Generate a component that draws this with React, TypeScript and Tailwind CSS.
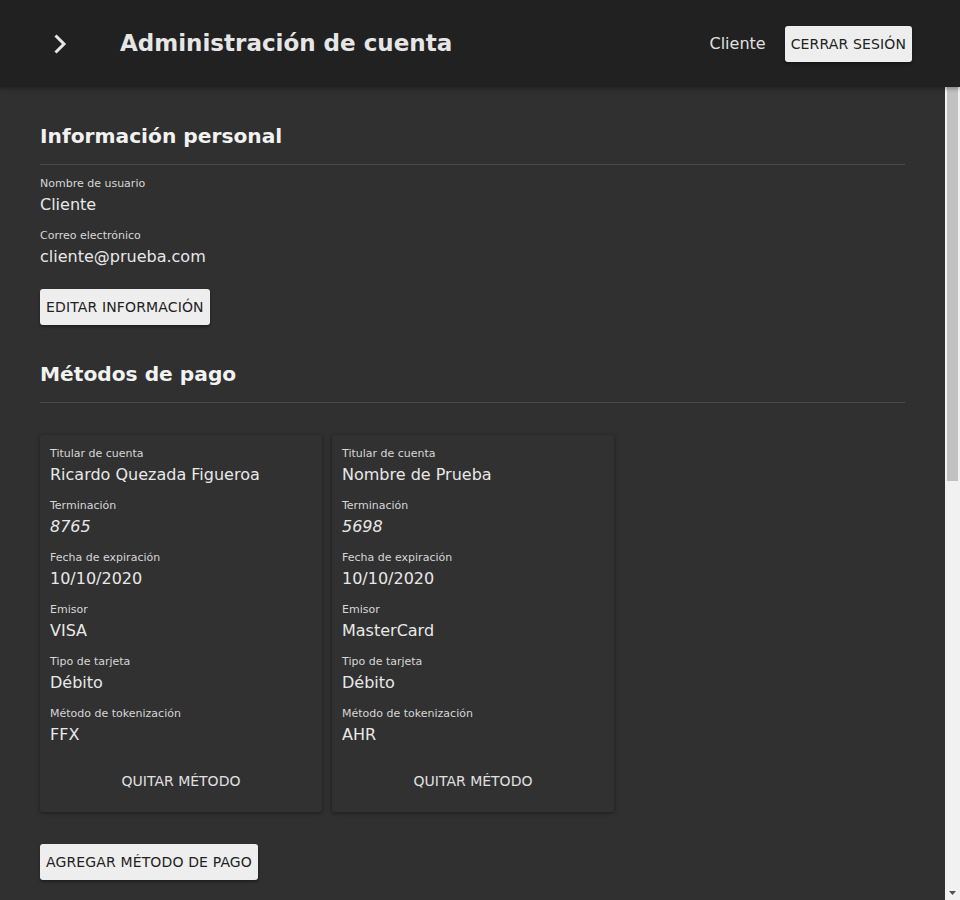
import { ReactNode } from 'react'

const cards = [
  {
    holder: 'Ricardo Quezada Figueroa',
    last4: '8765',
    expires: '10/10/2020',
    issuer: 'VISA',
    type: 'Débito',
    token: 'FFX',
  },
  {
    holder: 'Nombre de Prueba',
    last4: '5698',
    expires: '10/10/2020',
    issuer: 'MasterCard',
    type: 'Débito',
    token: 'AHR',
  },
]

function Field({ label, children, italic }: { label: string; children: ReactNode; italic?: boolean }) {
  return (
    <div className="mb-[10px]">
      <div className="text-[11px] leading-[18px] text-[#d6d6d6]">{label}</div>
      <div className={`text-base leading-6 text-[#e8e8e8] ${italic ? 'italic' : ''}`}>{children}</div>
    </div>
  )
}

function SectionTitle({ children }: { children: ReactNode }) {
  return (
    <div>
      <h2 className="text-[20.2px] leading-8 font-bold text-[#f2f2f2]">{children}</h2>
      <div className="mt-3 h-px bg-[#4a4a4a]" />
    </div>
  )
}

function LightButton({ children }: { children: ReactNode }) {
  return (
    <button className="h-9 px-1.5 rounded-[3px] bg-[#eeeeee] text-[#222] text-sm uppercase tracking-[0.01em] shadow-[0_2px_3px_rgba(0,0,0,0.35)]">
      {children}
    </button>
  )
}

export default function App() {
  return (
    <div className="h-[900px] w-[960px] overflow-hidden flex flex-col bg-[#303030] font-['DejaVu_Sans',sans-serif]">
      <header className="relative z-10 h-[87px] shrink-0 bg-[#212121] shadow-[0_2px_4px_rgba(0,0,0,0.3)] flex items-center pl-12 pr-12">
        <svg width="24" height="24" viewBox="0 0 24 24" fill="none" className="stroke-[#e6e6e6]">
          <path d="M7.5 3.5L16 12l-8.5 8.5" strokeWidth="3" strokeLinejoin="miter" />
        </svg>
        <h1 className="ml-12 text-[23px] font-bold text-[#e6e6e6]">Administración de cuenta</h1>
        <div className="ml-auto flex items-center gap-[19px]">
          <span className="text-base text-[#e0e0e0]">Cliente</span>
          <LightButton>Cerrar sesión</LightButton>
        </div>
      </header>

      <div className="flex flex-1 min-h-0">
        <main className="flex-1 min-w-0 flex flex-col pt-[33px] px-10">
          <SectionTitle>Información personal</SectionTitle>
          <div className="mt-[10px]">
            <Field label="Nombre de usuario">Cliente</Field>
            <Field label="Correo electrónico">cliente@prueba.com</Field>
          </div>
          <div className="mt-[10px]">
            <LightButton>Editar información</LightButton>
          </div>

          <div className="mt-[33px]">
            <SectionTitle>Métodos de pago</SectionTitle>
          </div>

          <div className="mt-[32px] flex gap-[10px]">
            {cards.map((c) => (
              <div key={c.last4} className="w-[282px] rounded-[3px] bg-[#313131] shadow-[0_1px_4px_rgba(0,0,0,0.45)]">
                <div className="px-[10px] pt-[10px]">
                  <Field label="Titular de cuenta">{c.holder}</Field>
                  <Field label="Terminación" italic>{c.last4}</Field>
                  <Field label="Fecha de expiración">{c.expires}</Field>
                  <Field label="Emisor">{c.issuer}</Field>
                  <Field label="Tipo de tarjeta">{c.type}</Field>
                  <Field label="Método de tokenización">{c.token}</Field>
                </div>
                <div className="flex justify-center pt-[6px] pb-[13px]">
                  <button className="h-9 px-2 text-sm uppercase text-[#e0e0e0]">Quitar método</button>
                </div>
              </div>
            ))}
          </div>

          <div className="mt-8">
            <LightButton>Agregar método de pago</LightButton>
          </div>
        </main>

        {/* scrollbar */}
        <div className="w-[15px] shrink-0 bg-[#f1f1f1] flex flex-col">
          <div className="h-[394px] mx-[2px] bg-[#c1c1c1]" />
          <div className="flex-1" />
          <div className="h-[15px] flex items-center justify-center">
            <svg width="7" height="4" viewBox="0 0 7 4" className="fill-[#505050]">
              <path d="M0 0h7L3.5 4z" />
            </svg>
          </div>
        </div>
      </div>
    </div>
  )
}
